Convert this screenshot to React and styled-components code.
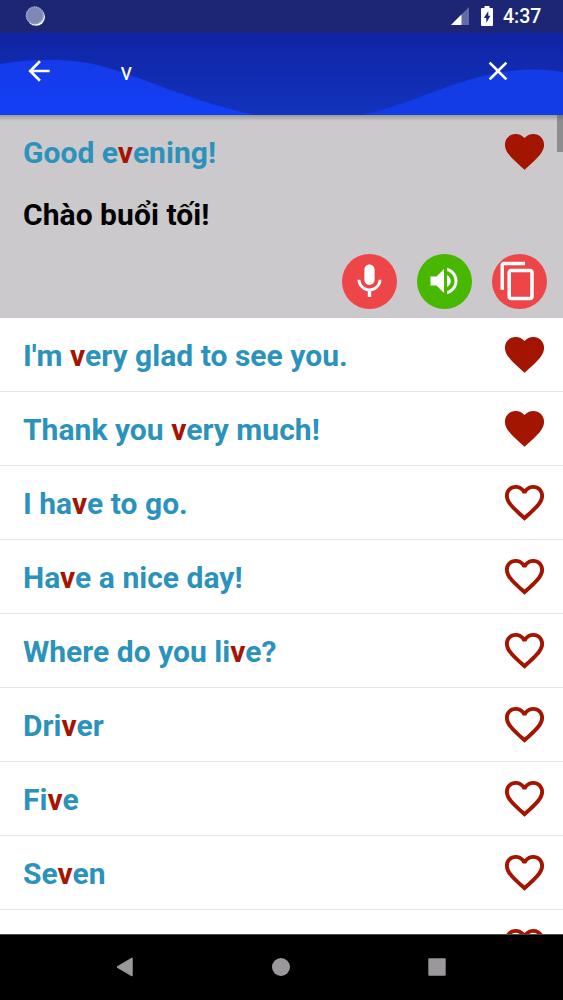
import React from "react";
import styled, { createGlobalStyle } from "styled-components";

const GlobalStyle = createGlobalStyle`
  * {
    box-sizing: border-box;
  }
  body {
    margin: 0;
    background: #000;
    font-family: "Roboto", sans-serif;
  }
  svg {
    display: block;
    flex-shrink: 0;
  }
`;
const Screen = styled.div`
  display: flex;
  flex-direction: column;
  width: 563px;
  height: 1000px;
  overflow: hidden;
`;
const StatusBar = styled.div`
  display: flex;
  align-items: center;
  height: 33px;
  flex-shrink: 0;
  padding: 0 22px 1px 25px;
  background: #1c2674;
`;
const StatusIcons = styled.div`
  display: flex;
  align-items: center;
  margin-left: auto;
`;
const Battery = styled.svg`
  margin: 0 10px 0 12px;
`;
const Time = styled.span`
  width: 38px;
  font-weight: 500;
  font-size: 19.5px;
  line-height: 32px;
  padding-top: 2px;
  color: #fff;
`;
const Header = styled.header`
  position: relative;
  height: 82px;
  flex-shrink: 0;
  background: linear-gradient(#1024a4, #1233bd);
`;
const Wave = styled.svg`
  position: absolute;
  inset: 0;
`;
const Toolbar = styled.div`
  position: relative;
  display: flex;
  align-items: center;
  height: 76px;
  padding: 0 49px 0 22.5px;
`;
const Query = styled.span`
  flex: 1;
  margin-left: 66px;
  padding-top: 2px;
  font-size: 24px;
  line-height: 28px;
  color: #fff;
`;
const Content = styled.main`
  position: relative;
  flex: 1;
  min-height: 0;
  overflow: hidden;
  background: #fff;
`;
const Shade = styled.div`
  position: absolute;
  top: 0;
  left: 0;
  right: 0;
  height: 6px;
  background: linear-gradient(rgba(80, 85, 70, 0.4), rgba(80, 85, 70, 0));
`;
const Thumb = styled.div`
  position: absolute;
  top: 0;
  right: 0;
  width: 6px;
  height: 37px;
  background: rgba(80, 80, 82, 0.5);
`;
const Selected = styled.section`
  height: 203px;
  background: #cbc9cb;
`;
const Row = styled.div`
  display: flex;
  align-items: center;
  justify-content: space-between;
  height: 74px;
  padding: 0 15px 0 23px;
  border-bottom: 1px solid ${(props) => (props.$plain ? "transparent" : "#e6e6e6")};
`;
const Phrase = styled.p`
  margin: 0;
  padding-top: 3px;
  font-weight: 700;
  font-size: 30px;
  line-height: 36px;
  letter-spacing: 0.03px;
  white-space: pre;
  color: #2b93bb;
`;
const Match = styled.span`
  color: #a31501;
`;
const Translation = styled.p`
  margin: 8px 0 0 23px;
  font-weight: 700;
  font-size: 30px;
  line-height: 36px;
  letter-spacing: 0.05px;
  color: #000;
`;
const Actions = styled.div`
  display: flex;
  justify-content: flex-end;
  gap: 20px;
  margin-top: 20.5px;
  padding-right: 16px;
`;
const Action = styled.button`
  display: flex;
  align-items: center;
  justify-content: center;
  width: 55px;
  height: 55px;
  padding: 0 ${(props) => props.$shift || 0}px 0 0;
  border: none;
  border-radius: 50%;
  background: ${(props) => props.$color};
`;
const NavBar = styled.nav`
  display: flex;
  align-items: center;
  justify-content: center;
  gap: 136px;
  height: 66px;
  flex-shrink: 0;
  padding: 0 1px 1px 0;
  border-top: 1px solid #4a4a4a;
  background: #000;
`;

const ICONS = {
  back: "M20 11H7.83l5.59-5.59L12 4l-8 8 8 8 1.41-1.41L7.83 13H20v-2z",
  close:
    "M19 6.41L17.59 5 12 10.59 6.41 5 5 6.41 10.59 12 5 17.59 6.41 19 12 13.41 17.59 19 19 17.59 13.41 12z",
  mic: "M12 14c1.66 0 2.99-1.34 2.99-3L15 5c0-1.66-1.34-3-3-3S9 3.34 9 5v6c0 1.66 1.34 3 3 3zm5.3-3c0 3-2.54 5.1-5.3 5.1S6.7 14 6.7 11H5c0 3.41 2.72 6.23 6 6.72V21h2v-3.28c3.28-.48 6-3.3 6-6.72h-1.7z",
  volume:
    "M3 9v6h4l5 5V4L7 9H3zm13.5 3c0-1.77-1.02-3.29-2.5-4.03v8.05c1.48-.73 2.5-2.25 2.5-4.02zM14 3.23v2.06c2.89.86 5 3.54 5 6.71s-2.11 5.85-5 6.71v2.06c4.01-.91 7-4.49 7-8.77s-2.99-7.86-7-8.77z",
  copy: "M16 1H4c-1.1 0-2 .9-2 2v14h2V3h12V1zm3 4H8c-1.1 0-2 .9-2 2v14c0 1.1.9 2 2 2h11c1.1 0 2-.9 2-2V7c0-1.1-.9-2-2-2zm0 16H8V7h11v14z",
  heart:
    "M12 21.35l-1.45-1.32C5.4 15.36 2 12.28 2 8.5 2 5.42 4.42 3 7.5 3c1.74 0 3.41.81 4.5 2.09C13.09 3.81 14.76 3 16.5 3 19.58 3 22 5.42 22 8.5c0 3.78-3.4 6.86-8.55 11.54L12 21.35z",
  heartOutline:
    "M16.5 3c-1.74 0-3.41.81-4.5 2.09C10.91 3.81 9.24 3 7.5 3 4.42 3 2 5.42 2 8.5c0 3.78 3.4 6.86 8.55 11.54L12 21.35l1.45-1.32C18.6 15.36 22 12.28 22 8.5 22 5.42 19.58 3 16.5 3zm-4.4 15.55l-.1.1-.1-.1C7.14 14.24 4 11.39 4 8.5 4 6.5 5.5 5 7.5 5c1.54 0 3.04.99 3.57 2.36h1.87C13.46 5.99 14.96 5 16.5 5c2 0 3.5 1.5 3.5 3.5 0 2.89-3.14 5.74-7.9 10.05z",
};

const phrases = [
  { text: "I'm very glad to see you.", liked: true },
  { text: "Thank you very much!", liked: true },
  { text: "I have to go." },
  { text: "Have a nice day!" },
  { text: "Where do you live?" },
  { text: "Driver" },
  { text: "Five" },
  { text: "Seven" },
  { text: "" },
];

function Icon({ name, size, color = "#fff" }) {
  return (
    <svg width={size} height={size} viewBox="0 0 24 24" fill={color}>
      <path d={ICONS[name]} />
    </svg>
  );
}

function PhraseRow({ text, liked, plain }) {
  const parts = text.split("v");
  return (
    <Row $plain={plain}>
      <Phrase>
        {parts.map((part, i) => (
          <React.Fragment key={i}>
            {i > 0 && <Match>v</Match>}
            {part}
          </React.Fragment>
        ))}
      </Phrase>
      <Icon name={liked ? "heart" : "heartOutline"} size={47} color="#a31501" />
    </Row>
  );
}

export default function App() {
  return (
    <Screen>
      <GlobalStyle />
      <StatusBar>
        <svg width="21" height="21" viewBox="0 0 21 21">
          <circle cx="11" cy="10.8" r="9" fill="#fff" />
          <circle cx="9.8" cy="9.4" r="9.1" fill="#7f87b5" />
          <circle
            cx="9.8"
            cy="9.4"
            r="8.2"
            fill="none"
            stroke="#a3a9cb"
            strokeWidth="1.6"
            strokeDasharray="1 1.2"
          />
        </svg>
        <StatusIcons>
          <svg width="18" height="18" viewBox="0 0 18 18">
            <path d="M0 18L18 0v18z" fill="#646ba4" />
            <path d="M0 18L10.5 7.5V18z" fill="#fff" />
          </svg>
          <Battery width="12" height="20" viewBox="0 0 12 20">
            <path
              d="M3.5 0h5v2H11q1 0 1 1v16q0 1-1 1H1q-1 0-1-1V3q0-1 1-1h2.500z"
              fill="#fff"
            />
            <path d="M7.300 5L2.800 12h2.500v5L9.400 9.800H7.300z" fill="#1c2674" />
          </Battery>
          <Time>4:37</Time>
        </StatusIcons>
      </StatusBar>
      <Header>
        <Wave width="563" height="82" viewBox="0 0 563 82">
          <defs>
            <linearGradient id="wave" x1="0" y1="0" x2="0" y2="1">
              <stop offset="0" stopColor="#163ae8" />
              <stop offset="1" stopColor="#123ff5" />
            </linearGradient>
          </defs>
          <path
            d="M0 31C35 25 75 25 105 34C150 47 190 68 255 82H0z"
            fill="url(#wave)"
          />
          <path
            d="M362 82C400 74 430 58 475 45C510 35 540 35 563 39V82z"
            fill="#133ce6"
          />
        </Wave>
        <Toolbar>
          <Icon name="back" size={32} />
          <Query>v</Query>
          <Icon name="close" size={32} />
        </Toolbar>
      </Header>
      <Content>
        <Selected>
          <PhraseRow text="Good evening!" liked plain />
          <Translation>Chào buổi tối!</Translation>
          <Actions>
            <Action $color="#ee4549">
              <Icon name="mic" size={41} />
            </Action>
            <Action $color="#47b700" $shift={1}>
              <Icon name="volume" size={36} />
            </Action>
            <Action $color="#ee4549" $shift={3}>
              <Icon name="copy" size={42} />
            </Action>
          </Actions>
        </Selected>
        {phrases.map((phrase, i) => (
          <PhraseRow key={i} text={phrase.text} liked={phrase.liked} />
        ))}
        <Shade />
        <Thumb />
      </Content>
      <NavBar>
        <svg width="20" height="20" viewBox="0 0 20 20" fill="#9b989c">
          <path
            d="M2.500 10L17 1.500v17z"
            stroke="#9b989c"
            strokeWidth="1.500"
            strokeLinejoin="round"
          />
        </svg>
        <svg width="20" height="20" viewBox="0 0 20 20" fill="#9b989c">
          <circle cx="10" cy="10" r="9" />
        </svg>
        <svg width="20" height="20" viewBox="0 0 20 20" fill="#9b989c">
          <rect x="1.300" y="1.300" width="17.400" height="17.400" rx="1" />
        </svg>
      </NavBar>
    </Screen>
  );
}
